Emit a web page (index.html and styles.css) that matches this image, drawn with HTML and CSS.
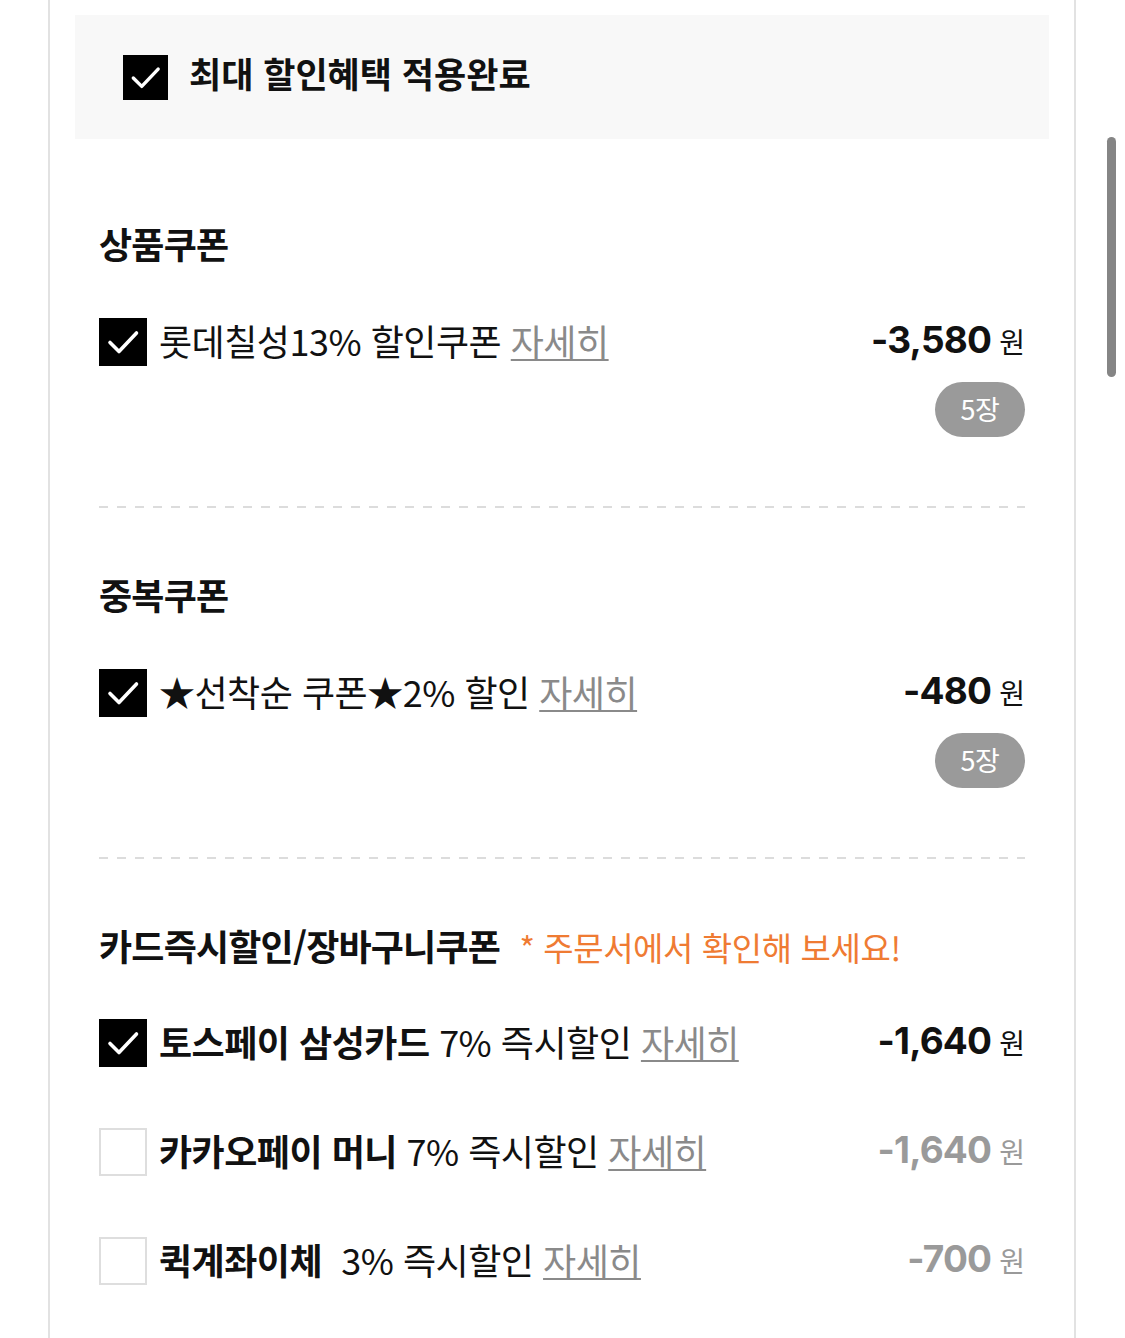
FILE: index.html
```html
<!DOCTYPE html>
<html lang="ko">
<head>
<meta charset="utf-8">
<link rel="stylesheet" href="styles.css">
</head>
<body>
<div class="page">
  <div class="banner">
    <span class="cb cb-checked cb-banner"><svg viewBox="0 0 48 48"><path d="M11 24.5 L20 33.5 L37.5 15"/></svg></span>
    <span class="banner-text">최대 할인혜택 적용완료</span>
  </div>

  <section class="sec sec-first">
    <h2 class="sec-title">상품쿠폰</h2>
    <div class="row">
      <span class="cb cb-checked"><svg viewBox="0 0 48 48"><path d="M11 24.5 L20 33.5 L37.5 15"/></svg></span>
      <span class="label">롯데칠성13% 할인쿠폰 <a class="more">자세히</a></span>
      <span class="price"><b>-3,580</b><i>원</i></span>
    </div>
    <div class="badge-row"><span class="badge">5장</span></div>
  </section>

  <section class="sec">
    <h2 class="sec-title">중복쿠폰</h2>
    <div class="row">
      <span class="cb cb-checked"><svg viewBox="0 0 48 48"><path d="M11 24.5 L20 33.5 L37.5 15"/></svg></span>
      <span class="label">★선착순 쿠폰★2% 할인 <a class="more">자세히</a></span>
      <span class="price"><b>-480</b><i>원</i></span>
    </div>
    <div class="badge-row"><span class="badge">5장</span></div>
  </section>

  <section class="sec sec-last">
    <h2 class="sec-title">카드즉시할인/장바구니쿠폰 <span class="note">* 주문서에서 확인해 보세요!</span></h2>
    <div class="row">
      <span class="cb cb-checked"><svg viewBox="0 0 48 48"><path d="M11 24.5 L20 33.5 L37.5 15"/></svg></span>
      <span class="label"><strong>토스페이 삼성카드</strong> 7% 즉시할인 <a class="more">자세히</a></span>
      <span class="price"><b>-1,640</b><i>원</i></span>
    </div>
    <div class="row row-gap">
      <span class="cb"></span>
      <span class="label"><strong>카카오페이 머니</strong> 7% 즉시할인 <a class="more">자세히</a></span>
      <span class="price price-off"><b>-1,640</b><i>원</i></span>
    </div>
    <div class="row row-gap">
      <span class="cb"></span>
      <span class="label"><strong>퀵계좌이체</strong>&nbsp; 3% 즉시할인 <a class="more">자세히</a></span>
      <span class="price price-off"><b>-700</b><i>원</i></span>
    </div>
  </section>
</div>
<div class="scrollbar"></div>
</body>
</html>
```

FILE: styles.css
```css
html, body {
  margin: 0;
  padding: 0;
  background: #fff;
}
body {
  width: 1125px;
  height: 1338px;
  overflow: hidden;
  position: relative;
  font-family: "Noto Sans CJK KR", "Noto Sans", sans-serif;
  color: #111;
}
.page {
  margin-left: 48px;
  width: 974px;
  min-height: 1338px;
  border-left: 2px solid #e2e2e2;
  border-right: 2px solid #e2e2e2;
  padding: 15px 25px 0;
  box-sizing: content-box;
}
.banner {
  height: 124px;
  background: #f8f8f8;
  display: flex;
  align-items: center;
  padding-left: 48px;
  gap: 21px;
}
.banner-text {
  font-size: 35px;
  font-weight: 700;
  letter-spacing: 0;
  line-height: 1;
  color: #111;
  margin-bottom: 9px;
}
.cb {
  width: 48px;
  height: 48px;
  box-sizing: border-box;
  border: 2px solid #dedede;
  background: #fff;
  flex: none;
  display: block;
}
.cb svg {
  display: block;
  width: 100%;
  height: 100%;
}
.cb svg path {
  fill: none;
  stroke: #fff;
  stroke-width: 3.6;
  stroke-linecap: round;
  stroke-linejoin: round;
}
.cb-checked {
  background: #000;
  border: none;
}
.cb-banner {
  width: 45px;
  height: 45px;
}
.sec {
  margin: 0 24px;
  padding: 62px 0 71px;
  background-image: repeating-linear-gradient(to right, #dcdcdc 0 9px, transparent 9px 18px);
  background-size: 100% 2px;
  background-repeat: no-repeat;
  background-position: left bottom;
}
.sec-first {
  padding-top: 80px;
}
.sec-last {
  background: none;
}
.sec-title {
  margin: 0;
  height: 48px;
  line-height: 48px;
  font-size: 36px;
  font-weight: 700;
  letter-spacing: -0.8px;
  color: #111;
  white-space: nowrap;
}
.note {
  color: #ef7b33;
  font-weight: 400;
  font-size: 33px;
  letter-spacing: -0.4px;
  margin-left: 10px;
}
.row {
  display: flex;
  align-items: center;
  height: 48px;
  margin-top: 51px;
}
.sec-last .row {
  margin-top: 50px;
}
.sec-last .row-gap {
  margin-top: 61px;
}
.label {
  margin-left: 12px;
  margin-bottom: 5px;
  font-size: 36px;
  letter-spacing: -0.5px;
  line-height: 48px;
  white-space: nowrap;
  color: #111;
  flex: 1;
}
.label strong {
  font-weight: 700;
  letter-spacing: -0.5px;
}
.more {
  color: #8a8a8a;
  text-decoration: underline;
  text-decoration-thickness: 2px;
  text-underline-offset: 3px;
}
.price {
  display: flex;
  align-items: baseline;
  gap: 8px;
  white-space: nowrap;
  color: #111;
  margin-bottom: 5px;
}
.price b {
  font-family: Inter, "Liberation Sans", sans-serif;
  font-weight: 700;
  font-size: 37px;
  letter-spacing: -0.8px;
}
.price i {
  font-style: normal;
  font-size: 28px;
  font-weight: 400;
}
.price-off {
  color: #9a9a9a;
}
.badge-row {
  display: flex;
  justify-content: flex-end;
  margin-top: 16px;
}
.badge {
  width: 90px;
  height: 55px;
  border-radius: 28px;
  background: #9a9a9a;
  color: #fff;
  font-size: 27px;
  display: flex;
  align-items: center;
  justify-content: center;
  letter-spacing: -0.5px;
  padding-bottom: 3px;
  box-sizing: border-box;
}
.scrollbar {
  position: absolute;
  left: 1107px;
  top: 137px;
  width: 9px;
  height: 240px;
  border-radius: 5px;
  background: #858585;
}
```
